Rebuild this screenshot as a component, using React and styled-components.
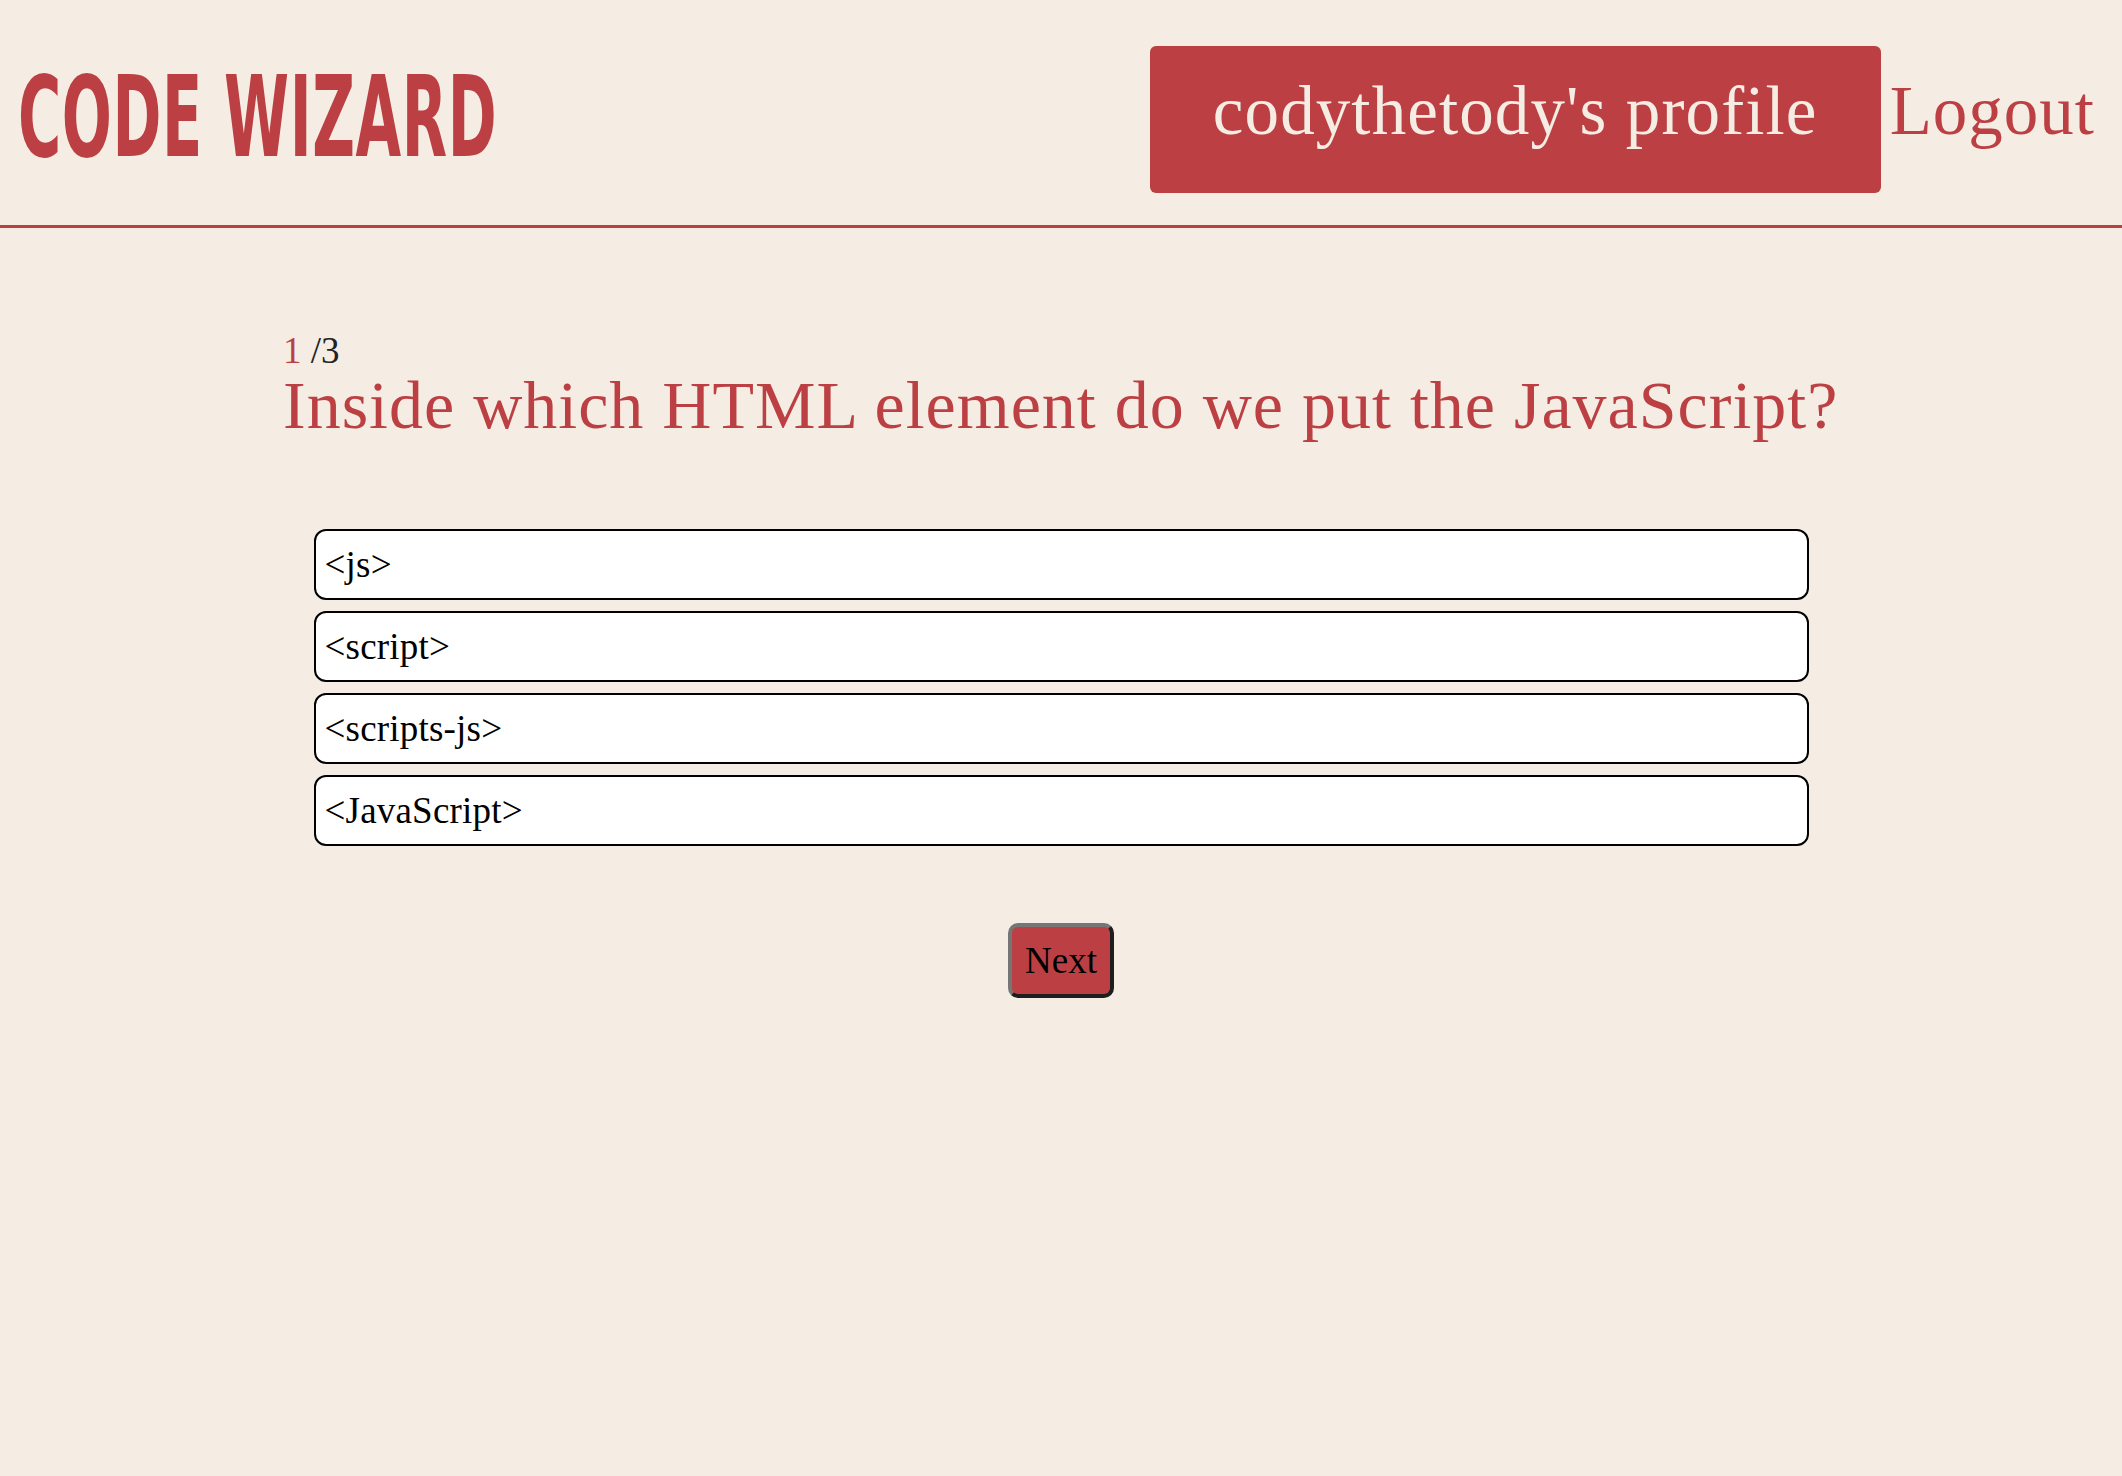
import React from "react";
import styled, { createGlobalStyle } from "styled-components";

const RED = "#bc4043";
const CREAM = "#f5ede3";

const Global = createGlobalStyle`
  html, body {
    margin: 0;
    padding: 0;
    background: ${CREAM};
    min-height: 100%;
  }
  body {
    font-family: "Liberation Serif", "Times New Roman", serif;
    min-height: 1476px;
  }
  * { box-sizing: border-box; }
`;

const Header = styled.header`
  display: flex;
  justify-content: space-between;
  align-items: flex-start;
  height: 228px;
  padding: 0 27px 0 20px;
  border-bottom: 3px solid ${RED};
`;

const Logo = styled.h1`
  margin: 61px 0 0 -2px;
  font-family: "DejaVu Sans Condensed", "DejaVu Sans", sans-serif;
  font-weight: 700;
  font-size: 112px;
  line-height: 1;
  color: ${RED};
  white-space: nowrap;
  display: inline-block;
  transform: scaleX(0.585);
  transform-origin: left top;
  letter-spacing: 1px;
`;

const Nav = styled.nav`
  display: flex;
  align-items: baseline;
  gap: 9px;
  margin-top: 46px;
`;

const ProfileButton = styled.a`
  display: block;
  width: 731px;
  height: 147px;
  padding-top: 31px;
  text-align: center;
  background: ${RED};
  color: ${CREAM};
  border-radius: 6px;
  font-size: 69px;
  line-height: 1;
  letter-spacing: 1.1px;
  text-decoration: none;
  white-space: nowrap;
`;

const LogoutLink = styled.a`
  color: ${RED};
  font-size: 69px;
  line-height: 1;
  letter-spacing: 1px;
  text-decoration: none;
`;

const Main = styled.main`
  width: 1556px;
  margin: 0 auto;
  padding-top: 104px;
`;

const Progress = styled.div`
  font-size: 37px;
  line-height: 1;
  color: #222;
`;

const Current = styled.span`
  color: ${RED};
`;

const Question = styled.h2`
  margin: 2px 0 0 0;
  font-weight: 400;
  font-size: 68px;
  line-height: 1;
  letter-spacing: 1px;
  color: ${RED};
  white-space: nowrap;
`;

const Options = styled.div`
  width: 1495px;
  margin: 90px auto 0;
  display: flex;
  flex-direction: column;
  gap: 11px;
`;

const Option = styled.button`
  display: flex;
  align-items: center;
  height: 71px;
  padding: 0 9px;
  background: #fff;
  border: 2px solid #000;
  border-radius: 12px;
  font-family: "Liberation Serif", "Times New Roman", serif;
  font-size: 37px;
  letter-spacing: 0.2px;
  color: #000;
  text-align: left;
  cursor: pointer;
`;

const Footer = styled.div`
  display: flex;
  justify-content: center;
  margin-top: 77px;
`;

const NextButton = styled.button`
  height: 75px;
  padding: 0 13px;
  background: ${RED};
  border-style: solid;
  border-width: 4px;
  border-color: #767676 #1e1e1e #1e1e1e #767676;
  border-radius: 10px;
  font-family: "Liberation Serif", "Times New Roman", serif;
  font-size: 37px;
  color: #000;
  cursor: pointer;
`;

const options = ["<js>", "<script>", "<scripts-js>", "<JavaScript>"];

export default function App() {
  return (
    <>
      <Global />
      <Header>
        <Logo>CODE WIZARD</Logo>
        <Nav>
          <ProfileButton href="#">codythetody's profile</ProfileButton>
          <LogoutLink href="#">Logout</LogoutLink>
        </Nav>
      </Header>
      <Main>
        <Progress>
          <Current>1</Current> /3
        </Progress>
        <Question>Inside which HTML element do we put the JavaScript?</Question>
        <Options>
          {options.map((o) => (
            <Option key={o}>{o}</Option>
          ))}
        </Options>
        <Footer>
          <NextButton>Next</NextButton>
        </Footer>
      </Main>
    </>
  );
}
